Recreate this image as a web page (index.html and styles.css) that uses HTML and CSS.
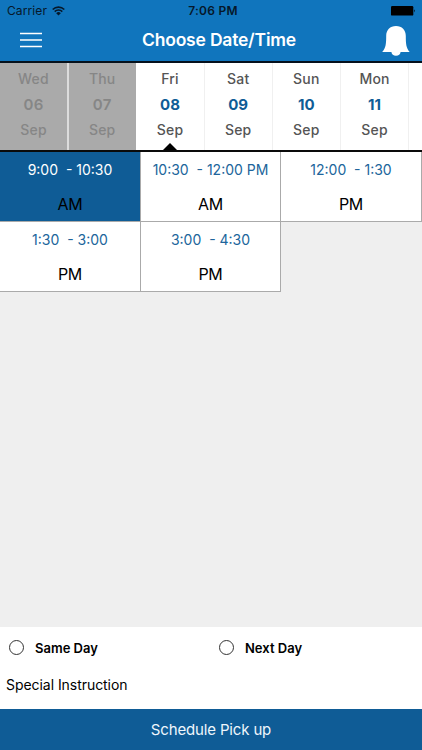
FILE: index.html
```html
<!doctype html>
<html lang="en">

<head>
    <meta charset="UTF-8" />
    <meta name="viewport" content="width=device-width, initial-scale=1.0" />
    <title>Choose Date/Time</title>
    <link rel="stylesheet" href="styles.css">
</head>

<body>
    <header class="header">
        <div class="status-bar">
            <div class="carrier">
                <span>Carrier</span>
                <svg class="wifi" viewBox="0 0 13 10" width="13" height="10">
                    <path d="M0.7 3.5a8.2 8.2 0 0 1 11.6 0M2.7 5.6a5.4 5.4 0 0 1 7.6 0" fill="none" stroke="#06182a" stroke-width="1.6" />
                    <path d="M4.2 7.2a3.2 3.2 0 0 1 4.6 0L6.5 9.6z" fill="#06182a" />
                </svg>
            </div>
            <span class="clock">7:06 PM</span>
            <svg class="battery" viewBox="0 0 25 10" width="25" height="10">
                <rect width="22.3" height="9.6" rx="1.2" />
                <path d="M23 3.2q1.6 1.6 0 3.2z" />
            </svg>
        </div>
        <div class="nav-bar">
            <svg class="menu-icon" viewBox="0 0 22 16" width="22" height="16">
                <path d="M0 1.5h22M0 8h22M0 14.5h22" stroke="#fff" stroke-width="1.5" />
            </svg>
            <h1>Choose Date/Time</h1>
            <svg class="bell-icon" viewBox="0 0 28 30" width="28" height="30" fill="#fff">
                <path d="M14 0C20 0 23.8 4 23.8 10C23.8 17 24 22 27.7 26H18.6Q18 29.8 14 29.8T9.4 26H0.2C4 22 4.2 17 4.2 10C4.2 4 8 0 14 0z" />
            </svg>
        </div>
    </header>

    <div class="dates">
        <div class="date past"><span>Wed</span><b>06</b><span>Sep</span></div>
        <div class="date past"><span>Thu</span><b>07</b><span>Sep</span></div>
        <div class="date active"><span>Fri</span><b>08</b><span>Sep</span></div>
        <div class="date"><span>Sat</span><b>09</b><span>Sep</span></div>
        <div class="date"><span>Sun</span><b>10</b><span>Sep</span></div>
        <div class="date"><span>Mon</span><b>11</b><span>Sep</span></div>
        <div class="date"></div>
    </div>

    <main class="slots">
        <div class="slot selected"><span class="time">9:00&nbsp; - 10:30</span><span class="period">AM</span></div>
        <div class="slot"><span class="time">10:30&nbsp; - 12:00 PM</span><span class="period">AM</span></div>
        <div class="slot"><span class="time">12:00&nbsp; - 1:30</span><span class="period">PM</span></div>
        <div class="slot"><span class="time">1:30&nbsp; - 3:00</span><span class="period">PM</span></div>
        <div class="slot"><span class="time">3:00&nbsp; - 4:30</span><span class="period">PM</span></div>
    </main>

    <form class="options">
        <div class="days">
            <label><input type="radio" name="day" /><span>Same Day</span></label>
            <label><input type="radio" name="day" /><span>Next Day</span></label>
        </div>
        <div class="instruction">Special Instruction</div>
        <button type="button" class="schedule">Schedule Pick up</button>
    </form>
</body>

</html>
```
FILE: styles.css
```css
* {
    box-sizing: border-box;
}

body {
    margin: 0;
    height: 750px;
    display: flex;
    flex-direction: column;
    overflow: hidden;
    font-family: Inter, "Liberation Sans", sans-serif;
    background: #efefef;
}

.header {
    height: 63px;
    background: #1075bd;
    border-bottom: 2px solid #05111c;
}

.status-bar {
    display: grid;
    grid-template-columns: 1fr auto 1fr;
    align-items: center;
    height: 21px;
    padding: 0 6px 0 7px;
    font-size: 12px;
    color: #06182a;
}

.carrier {
    display: flex;
    align-items: center;
    gap: 5px;
    letter-spacing: 0.1px;
}

.clock {
    padding-left: 3px;
    font-weight: 600;
    letter-spacing: 0.25px;
}

.battery {
    justify-self: end;
    fill: #000;
}

.nav-bar {
    display: grid;
    grid-template-columns: 64px 1fr 64px;
    align-items: center;
    height: 40px;
    color: #fff;
}

.nav-bar h1 {
    margin: 0;
    padding-left: 16px;
    padding-bottom: 3px;
    font-size: 17.5px;
    font-weight: 600;
    letter-spacing: -0.2px;
    text-align: center;
}

.menu-icon {
    margin-left: 20px;
    margin-bottom: 2px;
}

.bell-icon {
    margin-left: 24px;
}

.dates {
    display: flex;
    height: 89px;
    background: #fff;
    border-bottom: 2px solid #0a0a0a;
    overflow: hidden;
}

.date {
    position: relative;
    flex: 0 0 68.2px;
    display: flex;
    flex-direction: column;
    align-items: center;
    padding-top: 3px;
    border-right: 1px solid #f0f0f0;
    font-size: 14px;
    font-weight: 500;
    line-height: 25.5px;
    letter-spacing: 0.2px;
    color: #555;
}

.date b {
    font-size: 15px;
    font-weight: 700;
    letter-spacing: 0;
    color: #0f5c96;
}

.date.past {
    background: #aaa;
    border-right-color: #aaa;
    color: #868686;
}

.date.past:first-child {
    flex-basis: 69px;
    border-right: 2px solid #dcdcdc;
}

.date.past + .date.past {
    flex-basis: 67.4px;
}

.date.past b {
    font-weight: 600;
    letter-spacing: 0.3px;
    color: #868686;
}

.date.active::after {
    content: "";
    position: absolute;
    bottom: 0;
    border: 7px solid transparent;
    border-top: 0;
    border-bottom-color: #000;
}

.slots {
    flex: 1;
    display: grid;
    grid-template-columns: 141px 140px 141px;
    grid-auto-rows: 70px;
}

.slot {
    display: flex;
    flex-direction: column;
    align-items: center;
    background: #fff;
    border-right: 1px solid #aaa;
    border-bottom: 1px solid #aaa;
    line-height: 35px;
}

.time {
    font-size: 14px;
    color: #20659b;
}

.period {
    font-size: 16px;
    letter-spacing: -0.3px;
    color: #000;
}

.slot.selected {
    background: #0f5c96;
}

.selected .time {
    color: #fff;
}

.options {
    height: 123px;
    background: #fff;
}

.days {
    display: grid;
    grid-template-columns: 210px 1fr;
    height: 41px;
    padding-left: 9px;
}

.days label {
    display: flex;
    align-items: center;
    font-size: 13px;
    font-weight: 600;
}

.days input {
    appearance: none;
    width: 15px;
    height: 15px;
    margin: 0 11px 0 0;
    border: 1px solid #333;
    border-radius: 50%;
}

.instruction {
    height: 41px;
    padding-left: 6px;
    font-size: 14px;
    letter-spacing: -0.05px;
    line-height: 34px;
}

.schedule {
    display: block;
    width: 100%;
    height: 41px;
    padding: 0;
    border: 0;
    background: #0f5c96;
    color: #eef6fc;
    font-family: inherit;
    font-size: 15px;
    letter-spacing: -0.15px;
}
```
